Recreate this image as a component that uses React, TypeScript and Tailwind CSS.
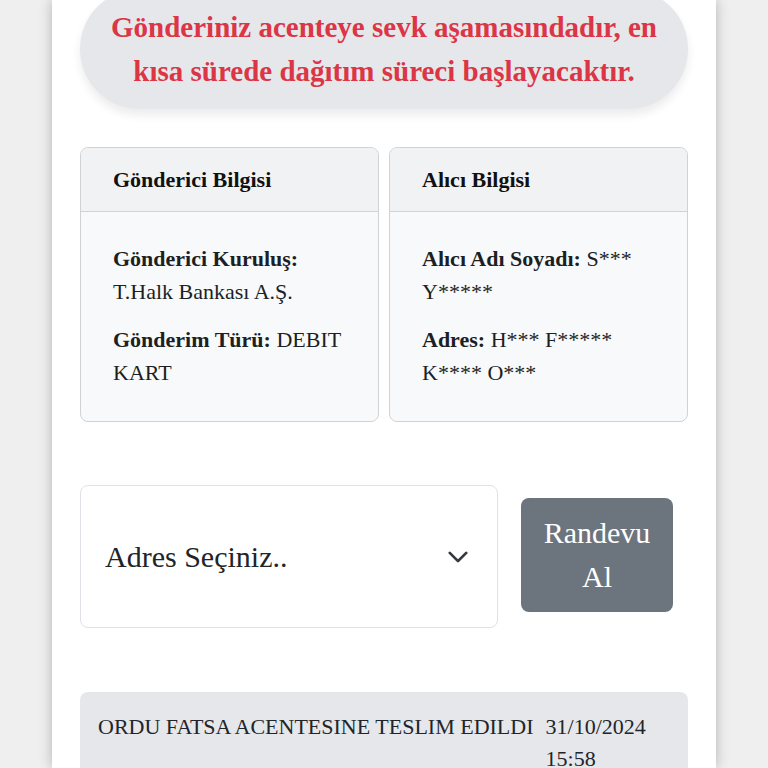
import React from 'react';

function InfoCard({ title, children }: { title: string; children: React.ReactNode }) {
  return (
    <div className="flex-1 overflow-hidden rounded-lg border border-[#cfd2d6] bg-[#f8f9fa]">
      <div className="flex h-[64px] items-center border-b border-[#cfd2d6] bg-[#f1f2f4] px-8">
        <h3 className="text-[22px] font-bold text-[#111]">{title}</h3>
      </div>
      <div className="space-y-[15px] px-8 pb-8 pt-[30px] text-[22px] leading-[33px] text-[#1c1f23]">{children}</div>
    </div>
  );
}

export default function App() {
  return (
    <div
      className="flex min-h-[768px] justify-center overflow-hidden bg-[#efefef]"
      style={{ fontFamily: '"Liberation Serif", "Times New Roman", serif' }}
    >
      <div className="h-[768px] w-[664px] overflow-hidden bg-white px-7 shadow-[0_0_12px_rgba(0,0,0,0.25)]">
        {/* Status banner */}
        <div className="-mt-[11px] rounded-full bg-[#e5e7eb] px-5 py-4 text-center text-[29px] font-bold leading-[44px] text-[#dc3545] shadow-[0_6px_10px_rgba(0,0,0,0.08)]">
          Gönderiniz acenteye sevk aşamasındadır, en kısa sürede dağıtım süreci başlayacaktır.
        </div>

        {/* Sender / receiver */}
        <div className="mt-[38px] flex gap-[10px]">
          <InfoCard title="Gönderici Bilgisi">
            <p>
              <b>Gönderici Kuruluş:</b> T.Halk Bankası A.Ş.
            </p>
            <p>
              <b>Gönderim Türü:</b> DEBIT KART
            </p>
          </InfoCard>
          <InfoCard title="Alıcı Bilgisi">
            <p>
              <b>Alıcı Adı Soyadı:</b> S*** Y*****
            </p>
            <p>
              <b>Adres:</b> H*** F***** K**** O***
            </p>
          </InfoCard>
        </div>

        {/* Address + appointment */}
        <div className="mt-[63px] flex items-center">
          <div className="flex h-[143px] w-[418px] items-center justify-between rounded-lg border border-[#dee2e6] bg-white pl-6 pr-7">
            <span className="text-[30px] text-[#212529]">Adres Seçiniz..</span>
            <svg width="22" height="22" viewBox="0 0 16 16" fill="none">
              <path d="m2 5 6 6 6-6" stroke="#343a40" strokeWidth="2" strokeLinecap="round" strokeLinejoin="round" />
            </svg>
          </div>
          <button className="-mt-[3px] ml-[23px] h-[114px] w-[152px] rounded-lg bg-[#6c757d] px-4 text-[30px] leading-[44px] text-white">
            Randevu Al
          </button>
        </div>

        {/* Movement history */}
        <div className="mt-[64px] rounded-lg bg-[#e5e7eb] px-[18px] pb-4 pt-[19px] text-[22px] leading-[32px] text-[#212529]">
          <div className="flex gap-[12px]">
            <span className="whitespace-nowrap">ORDU FATSA ACENTESINE TESLIM EDILDI</span>
            <span className="w-[104px]">31/10/2024 15:58</span>
          </div>
        </div>
      </div>
    </div>
  );
}
